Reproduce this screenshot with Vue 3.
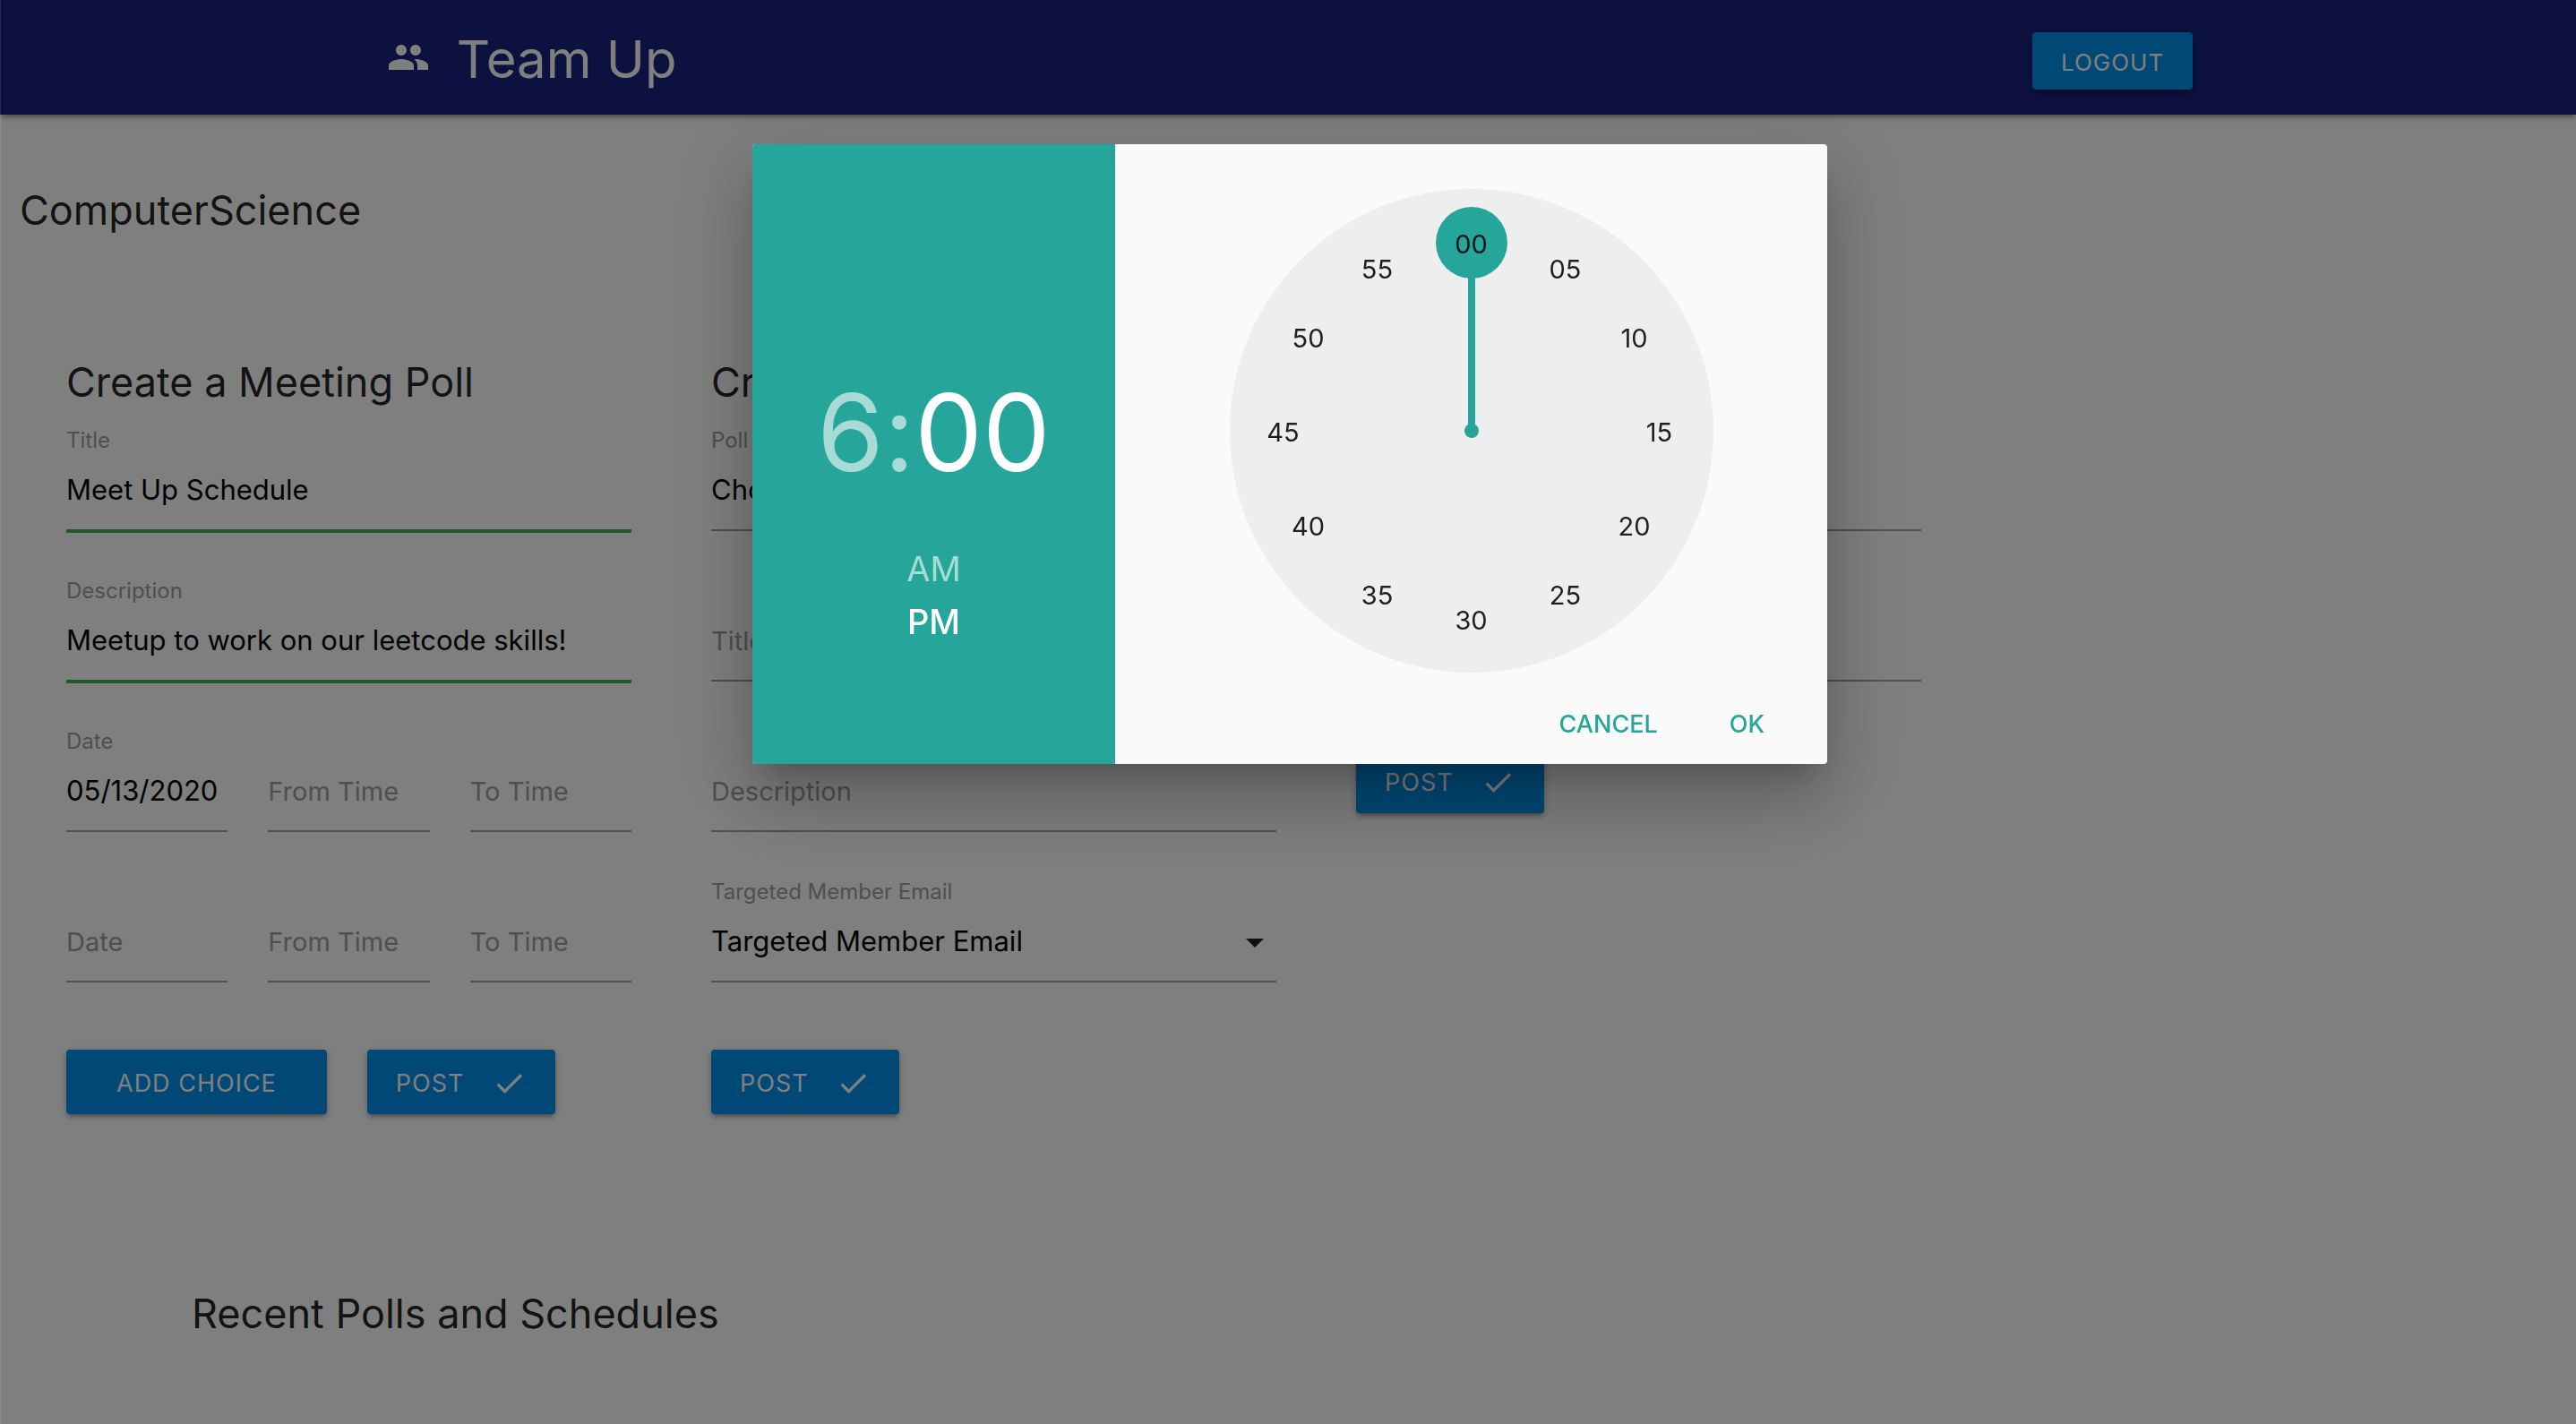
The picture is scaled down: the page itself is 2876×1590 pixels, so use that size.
<script setup>
import { ref, computed } from 'vue'

const title = ref('Meet Up Schedule')
const description = ref('Meetup to work on our leetcode skills!')
const choices = ref([
  { date: '05/13/2020', from: '', to: '' },
  { date: '', from: '', to: '' },
])

const hour = ref(6)
const minute = ref(0)
const period = ref('PM')

const pad = (n) => String(n).padStart(2, '0')

const ticks = Array.from({ length: 12 }, (_, i) => {
  const angle = (i * Math.PI) / 6
  return {
    value: i * 5,
    label: pad(i * 5),
    style: {
      left: `${270 + Math.round(210 * Math.sin(angle))}px`,
      top: `${272 - Math.round(210 * Math.cos(angle))}px`,
    },
  }
})

const hand = computed(() => `rotate(${minute.value * 6} 270 270)`)
</script>

<template>
  <div class="page">
    <header class="nav">
      <div class="nav-inner">
        <a class="brand" href="#">
          <svg class="brand-icon" viewBox="0 0 24 24" aria-hidden="true">
            <path d="M16 11c1.660 0 2.990-1.340 2.990-3S17.660 5 16 5c-1.660 0-3 1.340-3 3s1.340 3 3 3zm-8 0c1.660 0 2.990-1.340 2.990-3S9.660 5 8 5C6.340 5 5 6.340 5 8s1.340 3 3 3zm0 2c-2.330 0-7 1.170-7 3.500V19h14v-2.500c0-2.330-4.670-3.500-7-3.500zm8 0c-.290 0-.620.020-.970.050 1.160.840 1.970 1.970 1.970 3.450V19h6v-2.500c0-2.330-4.670-3.500-7-3.500z" />
          </svg>
          <span>Team Up</span>
        </a>
        <button class="btn btn-small" type="button">LOGOUT</button>
      </div>
    </header>

    <main>
      <h1 class="heading group-name">ComputerScience</h1>

      <div class="forms">
        <form class="form" @submit.prevent>
          <h2 class="heading">Create a Meeting Poll</h2>
          <div class="field">
            <label for="meeting-title">Title</label>
            <input id="meeting-title" v-model="title" class="valid" type="text" />
          </div>
          <div class="field">
            <label for="meeting-description">Description</label>
            <input id="meeting-description" v-model="description" class="valid" type="text" />
          </div>
          <div v-for="(choice, i) in choices" :key="i" class="choice">
            <div class="field">
              <label :for="`date-${i}`">{{ choice.date ? 'Date' : '' }}</label>
              <input :id="`date-${i}`" v-model="choice.date" type="text" placeholder="Date" aria-label="Date" />
            </div>
            <div class="field">
              <label :for="`from-${i}`"></label>
              <input :id="`from-${i}`" v-model="choice.from" type="text" placeholder="From Time" aria-label="From Time" />
            </div>
            <div class="field">
              <label :for="`to-${i}`"></label>
              <input :id="`to-${i}`" v-model="choice.to" type="text" placeholder="To Time" aria-label="To Time" />
            </div>
          </div>
          <div class="actions">
            <button class="btn btn-wide" type="button">ADD CHOICE</button>
            <button class="btn" type="submit">
              POST
              <svg class="btn-icon" viewBox="0 0 24 24" aria-hidden="true"><path d="M9 16.200L4.800 12l-1.400 1.400L9 19 21 7l-1.400-1.400L9 16.200z" /></svg>
            </button>
          </div>
        </form>

        <form class="form" @submit.prevent>
          <h2 class="heading">Create a Poll</h2>
          <div class="field">
            <label for="poll-type">Poll Type</label>
            <div class="select">
              <select id="poll-type"><option>Choose Poll Type</option></select>
              <svg class="caret" viewBox="0 0 20 10" aria-hidden="true"><path d="M0 0h20L10 10z" /></svg>
            </div>
          </div>
          <div class="field">
            <label for="poll-title"></label>
            <input id="poll-title" type="text" placeholder="Title" aria-label="Title" />
          </div>
          <div class="field">
            <label for="poll-description"></label>
            <input id="poll-description" type="text" placeholder="Description" aria-label="Description" />
          </div>
          <div class="field">
            <label for="member-email">Targeted Member Email</label>
            <div class="select">
              <select id="member-email"><option>Targeted Member Email</option></select>
              <svg class="caret" viewBox="0 0 20 10" aria-hidden="true"><path d="M0 0h20L10 10z" /></svg>
            </div>
          </div>
          <div class="actions">
            <button class="btn" type="submit">
              POST
              <svg class="btn-icon" viewBox="0 0 24 24" aria-hidden="true"><path d="M9 16.200L4.800 12l-1.400 1.400L9 19 21 7l-1.400-1.400L9 16.200z" /></svg>
            </button>
          </div>
        </form>

        <form class="form" @submit.prevent>
          <h2 class="heading">Create a Post</h2>
          <div class="field">
            <label for="post-title"></label>
            <input id="post-title" type="text" placeholder="Title" aria-label="Title" />
          </div>
          <div class="field">
            <label for="post-body"></label>
            <input id="post-body" type="text" placeholder="Description" aria-label="Description" />
          </div>
          <div class="actions">
            <button class="btn" type="submit">
              POST
              <svg class="btn-icon" viewBox="0 0 24 24" aria-hidden="true"><path d="M9 16.200L4.800 12l-1.400 1.400L9 19 21 7l-1.400-1.400L9 16.200z" /></svg>
            </button>
          </div>
        </form>
      </div>

      <h2 class="heading recent">Recent Polls and Schedules</h2>
    </main>

    <div class="overlay">
      <div class="modal" role="dialog" aria-modal="true" aria-label="Time">
        <div class="display">
          <div class="time">
            <span>{{ hour }}</span><span>:</span><span class="active">{{ pad(minute) }}</span>
          </div>
          <button
            v-for="p in ['AM', 'PM']"
            :key="p"
            class="period"
            :class="{ active: p === period }"
            type="button"
            @click="period = p"
          >{{ p }}</button>
        </div>
        <div class="picker">
          <div class="clock">
            <svg class="face" viewBox="0 0 540 540" aria-hidden="true">
              <circle cx="270" cy="270" r="270" fill="#eee" />
              <g fill="#26a69a" :transform="hand">
                <rect x="266" y="80" width="8" height="190" />
                <circle cx="270" cy="270" r="8" />
                <circle cx="270" cy="60" r="40" />
              </g>
            </svg>
            <button
              v-for="tick in ticks"
              :key="tick.value"
              class="tick"
              type="button"
              :style="tick.style"
              @click="minute = tick.value"
            >{{ tick.label }}</button>
          </div>
          <div class="modal-actions">
            <button class="flat" type="button">CANCEL</button>
            <button class="flat" type="button">OK</button>
          </div>
        </div>
      </div>
    </div>
  </div>
</template>

<style>
body {
  margin: 0;
  background: #fff;
}
</style>

<style scoped>
.page {
  min-height: 100vh;
  color: rgba(0, 0, 0, 0.87);
  font-family: Inter, 'Liberation Sans', sans-serif;
}

button,
input,
select {
  font-family: inherit;
}

.nav {
  padding-left: 4px;
  background: #1a237e;
  box-shadow: 0 4px 4px 0 rgba(0, 0, 0, 0.14), 0 6px 2px -4px rgba(0, 0, 0, 0.12),
    0 2px 10px 0 rgba(0, 0, 0, 0.2);
}

.nav-inner {
  display: flex;
  align-items: center;
  justify-content: space-between;
  width: calc(70% + 6px);
  height: 128px;
  margin: 0 auto;
}

.brand {
  display: flex;
  align-items: center;
  gap: 30px;
  color: #fff;
  font-size: 58px;
  line-height: 84px;
  text-decoration: none;
}

.brand span {
  padding-top: 4px;
}

.brand-icon {
  width: 48px;
  height: 48px;
  fill: #fff;
}

.btn {
  display: flex;
  align-items: center;
  gap: 30px;
  height: 72px;
  padding: 2px 32px 0;
  border: 0;
  border-radius: 4px;
  background: #0091ea;
  box-shadow: 0 4px 4px 0 rgba(0, 0, 0, 0.14), 0 6px 2px -4px rgba(0, 0, 0, 0.12),
    0 2px 10px 0 rgba(0, 0, 0, 0.2);
  color: #fff;
  font-size: 27px;
  letter-spacing: 1px;
}

.btn-small {
  height: 64px;
  margin-top: 8px;
  font-size: 26px;
}

.btn-wide {
  padding: 2px 56px 0;
}

.btn-icon {
  width: 39px;
  height: 39px;
  fill: #fff;
}

.heading {
  margin: 0;
  font-size: 45px;
  font-weight: 400;
  line-height: 54px;
}

.group-name {
  margin: 80px 22px 138px;
}

.forms {
  display: grid;
  grid-template-columns: repeat(4, 1fr);
  gap: 89px;
  padding: 0 11px 0 74px;
}

.form {
  min-width: 0;
}

.form .heading {
  margin-bottom: 22px;
}

.field {
  min-width: 0;
  margin-bottom: 50px;
}

.field label {
  display: block;
  height: 32px;
  color: #9e9e9e;
  font-size: 24px;
  line-height: 32px;
}

.field input,
.field select {
  display: block;
  box-sizing: border-box;
  width: 100%;
  height: 85px;
  padding: 0 0 6px;
  border: 0;
  border-bottom: 2px solid #9e9e9e;
  border-radius: 0;
  outline: 0;
  appearance: none;
  background: transparent;
  color: #000;
  font-size: 31px;
}

.field input,
.select {
  margin-bottom: 51px;
}

.field {
  margin-bottom: 0;
}

.field input::placeholder {
  color: #9e9e9e;
  font-size: 29px;
  opacity: 1;
}

.field input.valid {
  border-bottom-color: #4caf50;
  box-shadow: 0 2px 0 0 #4caf50;
}

.select {
  position: relative;
}

.caret {
  position: absolute;
  top: 36px;
  right: 14px;
  width: 20px;
  height: 10px;
  fill: rgba(0, 0, 0, 0.87);
  pointer-events: none;
}

.choice {
  display: grid;
  grid-template-columns: repeat(3, 1fr);
  gap: 45px;
}

.actions {
  display: flex;
  gap: 45px;
  padding-top: 24px;
}

.recent {
  margin: 196px 214px 94px;
}

.overlay {
  position: fixed;
  inset: 0;
  display: flex;
  align-items: flex-start;
  justify-content: center;
  padding: 161px 0 0 3px;
  border-left: 1px solid rgba(255, 255, 255, 0.1);
  background: rgba(0, 0, 0, 0.5);
}

.modal {
  display: flex;
  width: 100%;
  max-width: 1200px;
  overflow: hidden;
  border-radius: 4px;
  background: #fafafa;
  box-shadow: 0 48px 76px 6px rgba(0, 0, 0, 0.14), 0 18px 92px 16px rgba(0, 0, 0, 0.12),
    0 22px 30px -14px rgba(0, 0, 0, 0.2);
}

.display {
  display: flex;
  flex: 0 0 405px;
  flex-direction: column;
  align-items: center;
  justify-content: flex-end;
  box-sizing: border-box;
  padding-bottom: 129px;
  background: #26a69a;
  color: rgba(255, 255, 255, 0.6);
}

.time {
  margin-bottom: 63px;
  font-size: 120px;
  font-feature-settings: 'calt' 0;
  line-height: 120px;
}

.period {
  padding: 0;
  border: 0;
  background: none;
  color: inherit;
  font-size: 38px;
  line-height: 59px;
}

.active {
  color: #fff;
}

.period.active {
  font-weight: 500;
}

.picker {
  display: flex;
  flex: 1;
  flex-direction: column;
  align-items: center;
  padding-top: 50px;
}

.clock {
  position: relative;
  width: 540px;
  height: 540px;
}

.face {
  display: block;
  width: 100%;
  height: 100%;
}

.tick {
  position: absolute;
  width: 80px;
  height: 80px;
  margin: -40px 0 0 -40px;
  padding: 0;
  border: 0;
  border-radius: 50%;
  background: none;
  color: rgba(0, 0, 0, 0.87);
  font-size: 29px;
  line-height: 80px;
}

.modal-actions {
  display: flex;
  align-self: stretch;
  justify-content: flex-end;
  gap: 16px;
  padding: 21px 38px 9px;
}

.flat {
  height: 72px;
  padding: 0 32px;
  border: 0;
  background: none;
  color: #26a69a;
  font-size: 27px;
  font-weight: 500;
}
</style>
